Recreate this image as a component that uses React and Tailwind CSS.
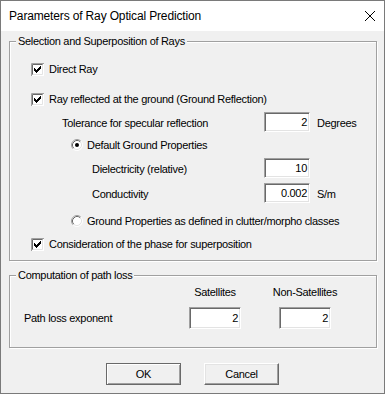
import React from "react";

function CheckBox() {
  const tops = [5, 6, 7, 6, 5, 4, 3];
  return (
    <svg width="13" height="13" viewBox="0 0 13 13" className="shrink-0 block">
      <rect x="0" y="0" width="13" height="13" fill="#fff" />
      <path d="M0.5 13V0.5H13" stroke="#a0a0a0" fill="none" />
      <path d="M1.5 12V1.5H12" stroke="#696969" fill="none" />
      <path d="M1.5 11.5H11.5V1.5" stroke="#e3e3e3" fill="none" />
      {tops.map((t, i) => (
        <rect key={i} x={3 + i} y={t} width="1" height="3" fill="#000" />
      ))}
    </svg>
  );
}

function Radio({ checked }) {
  return (
    <svg width="12" height="12" viewBox="0 0 12 12" className="shrink-0 block">
      <circle cx="6" cy="6" r="5" fill="#fff" />
      <path d="M2.11 9.89A5.5 5.5 0 0 1 9.89 2.11" stroke="#a0a0a0" fill="none" />
      <path d="M2.82 9.18A4.5 4.5 0 0 1 9.18 2.82" stroke="#696969" fill="none" />
      <path d="M9.89 2.11A5.5 5.5 0 0 1 2.11 9.89" stroke="#ffffff" fill="none" />
      <path d="M9.18 2.82A4.5 4.5 0 0 1 2.82 9.18" stroke="#e3e3e3" fill="none" />
      {checked && <circle cx="6" cy="6" r="2" fill="#000" />}
    </svg>
  );
}

function Edit({ className, value }) {
  return (
    <div
      className={
        "flex items-center justify-end pr-[2px] bg-white border border-t-[#a0a0a0] border-l-[#a0a0a0] border-r-white border-b-white shadow-[inset_1px_1px_0_#696969,inset_-1px_-1px_0_#e3e3e3] shrink-0 " +
        className
      }
    >
      <span className="pt-[1px]">{value}</span>
    </div>
  );
}

export default function App() {
  return (
    <div className="w-[385px] h-[394px] border border-[#7a7a7a] bg-[#f0f0f0] flex flex-col font-['Liberation_Sans',Arial,sans-serif] text-[11px] tracking-[-0.3px] leading-none text-black select-none overflow-hidden">
      <div className="h-[30px] bg-white flex items-center justify-between pl-[8px] pr-[9px] shrink-0">
        <span className="text-[12px] tracking-[-0.15px]">Parameters of Ray Optical Prediction</span>
        <svg width="10" height="10" viewBox="0 0 10 10" className="block">
          <path d="M0 0L10 10M10 0L0 10" stroke="#000" strokeWidth="1" />
        </svg>
      </div>

      <fieldset className="ml-[8px] mt-[3px] w-[368px] border border-[#a0a0a0] shadow-[inset_1px_1px_0_#fff,1px_1px_0_#fff] pb-[6px] min-w-0">
        <legend className="ml-[6px] px-[2px] bg-[#f0f0f0] h-[14px] leading-[14px]">
          Selection and Superposition of Rays
        </legend>
        <div className="flex items-center h-[20px] mt-[11px] ml-[21px]">
          <CheckBox />
          <span className="ml-[5px]">Direct Ray</span>
        </div>
        <div className="flex items-center h-[20px] mt-[10px] ml-[21px]">
          <CheckBox />
          <span className="ml-[5px]">Ray reflected at the ground (Ground Reflection)</span>
        </div>
        <div className="flex items-center h-[20px] mt-[3px] ml-[52px]">
          <span className="w-[202px] shrink-0 pt-[2px]">Tolerance for specular reflection</span>
          <Edit className="w-[46px] h-[20px]" value="2" />
          <span className="ml-[7px] pt-[2px]">Degrees</span>
        </div>
        <div className="flex items-center h-[20px] mt-[3px] ml-[61px]">
          <Radio checked />
          <span className="ml-[4px]">Default Ground Properties</span>
        </div>
        <div className="flex items-center h-[20px] mt-[3px] ml-[82px]">
          <span className="w-[172px] shrink-0 pt-[3px]">Dielectricity (relative)</span>
          <Edit className="w-[46px] h-[20px]" value="10" />
        </div>
        <div className="flex items-center h-[20px] mt-[5px] ml-[82px]">
          <span className="w-[172px] shrink-0 pt-[3px]">Conductivity</span>
          <Edit className="w-[46px] h-[20px]" value="0.002" />
          <span className="ml-[7px] pt-[2px]">S/m</span>
        </div>
        <div className="flex items-center h-[20px] mt-[8px] ml-[61px]">
          <Radio />
          <span className="ml-[4px]">Ground Properties as defined in clutter/morpho classes</span>
        </div>
        <div className="flex items-center h-[20px] mt-[3px] ml-[21px]">
          <CheckBox />
          <span className="ml-[5px]">Consideration of the phase for superposition</span>
        </div>
      </fieldset>

      <fieldset className="ml-[8px] mt-[7px] w-[368px] border border-[#a0a0a0] shadow-[inset_1px_1px_0_#fff,1px_1px_0_#fff] pb-[18px] min-w-0">
        <legend className="ml-[6px] px-[2px] bg-[#f0f0f0] h-[14px] leading-[14px]">
          Computation of path loss
        </legend>
        <div className="flex items-center h-[14px] mt-[3px] ml-[179px]">
          <div className="w-[52px] flex justify-center whitespace-nowrap">Satellites</div>
          <div className="w-[52px] ml-[38px] flex justify-center whitespace-nowrap">Non-Satellites</div>
        </div>
        <div className="flex items-center h-[22px] mt-[8px] ml-[14px]">
          <span className="w-[165px] shrink-0 pt-[1px]">Path loss exponent</span>
          <Edit className="w-[52px] h-[22px]" value="2" />
          <Edit className="w-[52px] h-[22px] ml-[38px]" value="2" />
        </div>
      </fieldset>

      <div className="flex justify-center gap-[23px] mt-[15px]">
        <button className="w-[75px] h-[22px] flex items-center justify-center bg-[#f0f0f0] border border-[#696969] shadow-[inset_1px_1px_0_#fff,inset_-1px_-1px_0_#a0a0a0] font-['Liberation_Sans',Arial,sans-serif] text-[11px] tracking-[-0.3px]">
          OK
        </button>
        <button className="w-[75px] h-[22px] flex items-center justify-center bg-[#f0f0f0] border border-t-white border-l-white border-b-[#696969] border-r-[#696969] shadow-[inset_-1px_-1px_0_#a0a0a0,inset_1px_1px_0_#e3e3e3] font-['Liberation_Sans',Arial,sans-serif] text-[11px] tracking-[-0.3px]">
          Cancel
        </button>
      </div>
    </div>
  );
}
